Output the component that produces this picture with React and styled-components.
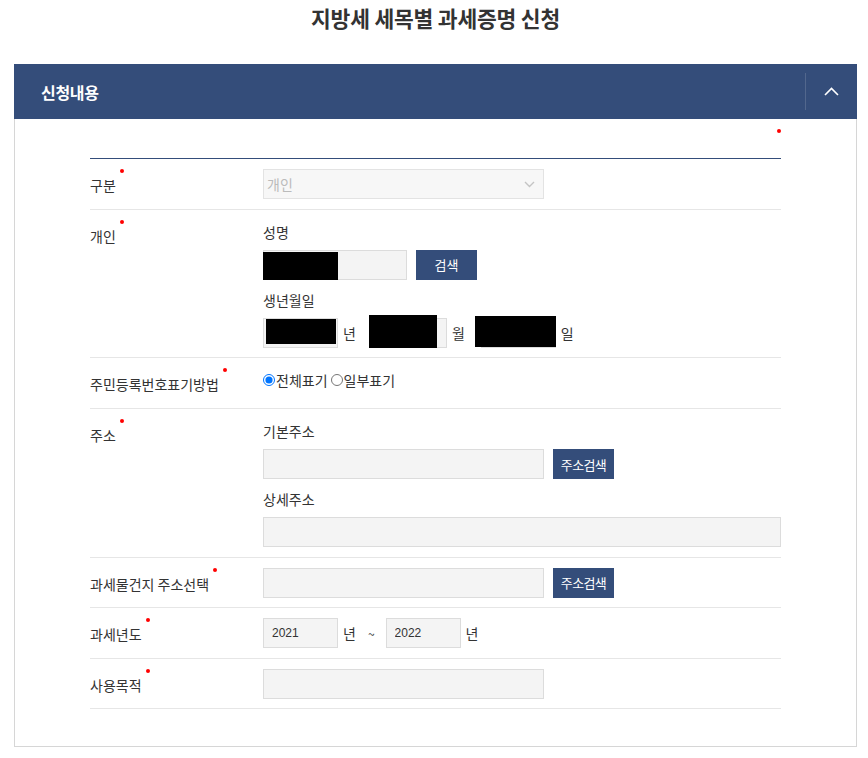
import React from "react";
import styled, { createGlobalStyle } from "styled-components";

const navy = "#344d7a";

const GlobalStyle = createGlobalStyle`
  * { box-sizing: border-box; }
  body {
    margin: 0;
    background: #fff;
    font-family: "Noto Sans CJK KR", "Noto Sans", sans-serif;
    color: #333;
  }
`;

const Page = styled.div`
  padding: 0 11px 0 14px;
`;

const Title = styled.h1`
  margin: 0;
  height: 64px;
  padding-top: 3px;
  text-align: center;
  font-size: 21.5px;
  line-height: 30px;
  letter-spacing: -0.2px;
  font-weight: 700;
  color: #333;
`;

const Panel = styled.section`
  border: 1px solid #d6d6d6;
  border-top: 0;
`;

const PanelHeader = styled.div`
  height: 55px;
  margin: 0 -1px;
  background: ${navy};
  display: flex;
  align-items: center;
  justify-content: space-between;
`;

const PanelTitle = styled.h2`
  margin: 0 0 0 27px;
  font-size: 16px;
  font-weight: 700;
  color: #fff;
  letter-spacing: -0.3px;
`;

const Toggle = styled.button`
  width: 52px;
  height: 37px;
  border: 0;
  border-left: 1px solid rgba(255, 255, 255, 0.15);
  background: transparent;
  display: flex;
  align-items: center;
  justify-content: center;
  padding: 0;
  cursor: pointer;
`;

const Body = styled.div`
  padding: 0 75px 37px 75px;
`;

const Legend = styled.div`
  height: 39px;
  display: flex;
  justify-content: flex-end;
  padding: 10px 0 0;
`;

const Dot = styled.span`
  width: 4px;
  height: 4px;
  border-radius: 50%;
  background: #f00;
`;

const Table = styled.div`
  border-top: 1px solid ${navy};
`;

const Row = styled.div`
  display: grid;
  grid-template-columns: 173px 1fr;
  border-bottom: 1px solid #e6e6e6;
`;

const Label = styled.div`
  padding-top: 16px;
  font-size: 14px;
  line-height: 20px;
  color: #333;
`;

const Required = styled.span`
  position: relative;
  &::after {
    content: "";
    position: absolute;
    top: -6px;
    right: -8px;
    width: 4px;
    height: 4px;
    border-radius: 50%;
    background: #f00;
  }
`;

const Cell = styled.div`
  padding: ${(p) => (p.$radio ? "11px 0 17px" : "10px 0 9.5px")};
`;

const SubLabel = styled.div`
  font-size: 14px;
  line-height: 24px;
  margin: ${(p) => (p.$first ? "0" : "8px")} 0 6px;
  color: #333;
`;

const Line = styled.div`
  display: flex;
  align-items: center;
`;

const Field = styled.div`
  position: relative;
  width: ${(p) => p.$w}px;
  height: 30px;
`;

const Input = styled.input`
  width: 100%;
  height: 100%;
  border: 1px solid #dcdcdc;
  background: #f4f4f4;
  padding: 0 8px;
  font-family: "Liberation Sans", Arial, sans-serif;
  font-size: 12px;
  color: #333;
  outline: none;
`;

const Redact = styled.span`
  position: absolute;
  left: ${(p) => p.$l}px;
  top: ${(p) => p.$t}px;
  width: ${(p) => p.$w}px;
  height: ${(p) => p.$h}px;
  background: #000;
`;

const Button = styled.button`
  height: 30px;
  width: 61px;
  margin-left: 9px;
  border: 0;
  background: ${navy};
  color: #fff;
  font-family: inherit;
  font-size: 13px;
  letter-spacing: ${(p) => (p.$small ? "-0.6px" : "0")};
  padding: 0;
`;

const Unit = styled.span`
  font-size: 14px;
  margin-left: 5px;
  margin-right: ${(p) => p.$mr || 0}px;
`;

const Tilde = styled.span`
  font-size: 12px;
  margin: 0 11px 0 12px;
`;

const SelectBox = styled.div`
  width: 281px;
  height: 30px;
  border: 1px solid #e3e3e3;
  background: #f7f7f7;
  display: flex;
  align-items: center;
  justify-content: space-between;
  padding: 0 8px 0 3px;
  font-size: 14px;
  color: #bbb;
`;

const Radios = styled.div`
  height: 22px;
  display: flex;
  align-items: center;
  font-size: 14px;
  color: #333;
`;

const RadioLabel = styled.label`
  display: inline-flex;
  align-items: center;
  margin-right: 3px;
  input {
    margin: 0 1px 0 0;
    width: 12px;
    height: 12px;
  }
`;

function Req({ children }) {
  return (
    <Label>
      <Required>{children}</Required>
    </Label>
  );
}

export default function App() {
  return (
    <Page>
      <GlobalStyle />
      <Title>지방세 세목별 과세증명 신청</Title>
      <Panel>
        <PanelHeader>
          <PanelTitle>신청내용</PanelTitle>
          <Toggle aria-label="접기">
            <svg width="15" height="9" viewBox="0 0 15 9">
              <polyline points="1,8 7.5,1.5 14,8" fill="none" stroke="#fff" strokeWidth="1.6" />
            </svg>
          </Toggle>
        </PanelHeader>
        <Body>
          <Legend>
            <Dot />
          </Legend>
          <Table>
            <Row>
              <Req>구분</Req>
              <Cell>
                <SelectBox>
                  <span>개인</span>
                  <svg width="11" height="7" viewBox="0 0 11 7">
                    <polyline points="1,1 5.5,5.5 10,1" fill="none" stroke="#c4c4c4" strokeWidth="1.4" />
                  </svg>
                </SelectBox>
              </Cell>
            </Row>
            <Row>
              <Req>개인</Req>
              <Cell>
                <SubLabel $first>성명</SubLabel>
                <Line>
                  <Field $w={144}>
                    <Input />
                    <Redact $l={0} $t={2} $w={75} $h={28} />
                  </Field>
                  <Button>검색</Button>
                </Line>
                <SubLabel>생년월일</SubLabel>
                <Line>
                  <Field $w={75}>
                    <Input />
                    <Redact $l={3} $t={1} $w={70} $h={25} />
                  </Field>
                  <Unit $mr={15}>년</Unit>
                  <Field $w={76}>
                    <Input />
                    <Redact $l={-2} $t={-3} $w={68} $h={33} />
                  </Field>
                  <Unit $mr={16}>월</Unit>
                  <Field $w={75}>
                    <Input />
                    <Redact $l={-6} $t={-2} $w={81} $h={31} />
                  </Field>
                  <Unit>일</Unit>
                </Line>
              </Cell>
            </Row>
            <Row>
              <Req>주민등록번호표기방법</Req>
              <Cell $radio>
                <Radios>
                  <RadioLabel>
                    <input type="radio" name="rrn" defaultChecked />
                    전체표기
                  </RadioLabel>
                  <RadioLabel>
                    <input type="radio" name="rrn" />
                    일부표기
                  </RadioLabel>
                </Radios>
              </Cell>
            </Row>
            <Row>
              <Req>주소</Req>
              <Cell>
                <SubLabel $first>기본주소</SubLabel>
                <Line>
                  <Field $w={281}>
                    <Input />
                  </Field>
                  <Button $small>주소검색</Button>
                </Line>
                <SubLabel>상세주소</SubLabel>
                <Field $w={518}>
                  <Input />
                </Field>
              </Cell>
            </Row>
            <Row>
              <Req>과세물건지 주소선택</Req>
              <Cell>
                <Line>
                  <Field $w={281}>
                    <Input />
                  </Field>
                  <Button $small>주소검색</Button>
                </Line>
              </Cell>
            </Row>
            <Row>
              <Req>과세년도</Req>
              <Cell>
                <Line>
                  <Field $w={75}>
                    <Input defaultValue="2021" />
                  </Field>
                  <Unit>년</Unit>
                  <Tilde>~</Tilde>
                  <Field $w={75}>
                    <Input defaultValue="2022" />
                  </Field>
                  <Unit>년</Unit>
                </Line>
              </Cell>
            </Row>
            <Row>
              <Req>사용목적</Req>
              <Cell>
                <Field $w={281}>
                  <Input />
                </Field>
              </Cell>
            </Row>
          </Table>
        </Body>
      </Panel>
    </Page>
  );
}
